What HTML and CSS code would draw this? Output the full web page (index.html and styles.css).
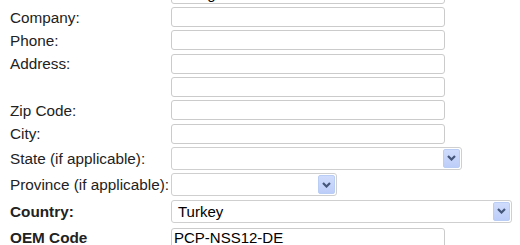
FILE: index.html
```html
<!DOCTYPE html>
<html>
<head>
<meta charset="utf-8">
<link rel="stylesheet" href="styles.css">
</head>
<body>
<div class="form">
  <div class="label"></div>
  <div class="field"><div class="input w-std">Georg</div></div>

  <div class="label">Company:</div>
  <div class="field"><div class="input w-std"></div></div>

  <div class="label">Phone:</div>
  <div class="field"><div class="input w-std"></div></div>

  <div class="label">Address:</div>
  <div class="field"><div class="input w-std"></div></div>

  <div class="label"></div>
  <div class="field"><div class="input w-std"></div></div>

  <div class="label">Zip Code:</div>
  <div class="field"><div class="input w-std"></div></div>

  <div class="label">City:</div>
  <div class="field"><div class="input w-std"></div></div>

  <div class="label">State (if applicable):</div>
  <div class="field">
    <div class="select w-state"><span class="sel-text"></span>
      <span class="sel-btn"><svg width="9" height="6" viewBox="0 0 9 6"><path d="M1 1 L4.5 4.5 L8 1" fill="none" stroke="#45567a" stroke-width="2.2"/></svg></span>
    </div>
  </div>

  <div class="label">Province (if applicable):</div>
  <div class="field">
    <div class="select w-prov"><span class="sel-text"></span>
      <span class="sel-btn"><svg width="9" height="6" viewBox="0 0 9 6"><path d="M1 1 L4.5 4.5 L8 1" fill="none" stroke="#45567a" stroke-width="2.2"/></svg></span>
    </div>
  </div>

  <div class="label bold">Country:</div>
  <div class="field">
    <div class="select w-country"><span class="sel-text">Turkey</span>
      <span class="sel-btn"><svg width="9" height="6" viewBox="0 0 9 6"><path d="M1 1 L4.5 4.5 L8 1" fill="none" stroke="#45567a" stroke-width="2.2"/></svg></span>
    </div>
  </div>

  <div class="label bold oem">OEM Code</div>
  <div class="field oem"><div class="input w-std">PCP-NSS12-DE</div></div>
</div>
</body>
</html>
```

FILE: styles.css
```css
html, body {
  margin: 0;
  padding: 0;
  background: #ffffff;
  overflow: hidden;
}

body {
  width: 520px;
  height: 245px;
  font-family: "Liberation Sans", Arial, sans-serif;
  font-size: 15px;
  color: #1e1e1e;
}

.form {
  display: grid;
  grid-template-columns: 161px 1fr;
  row-gap: 3.33px;
  align-items: center;
  margin: -16.33px 0 0 10px;
}

.label {
  white-space: nowrap;
  line-height: 17px;
  font-size: 15.3px;
  color: #222;
}

.bold {
  font-weight: bold;
}

.oem {
  margin-top: 2px;
}

.field {
  display: flex;
}

.input {
  box-sizing: border-box;
  height: 20px;
  border: 1px solid #cbcbcb;
  border-radius: 3px;
  background: #fff;
  padding: 0 2px;
  line-height: 18px;
  color: #000;
  white-space: nowrap;
  overflow: hidden;
}

.w-std { width: 274px; }
.w-state { width: 291px; }
.w-prov { width: 166px; }
.w-country { width: 341px; }

.select {
  box-sizing: border-box;
  height: 23px;
  border: 1px solid #cfcfcf;
  border-radius: 3px;
  background: #fff;
  display: flex;
  align-items: center;
  justify-content: space-between;
  padding: 1px 1px 1px 6px;
  color: #000;
}

.sel-text {
  line-height: 17px;
}

.sel-btn {
  box-sizing: border-box;
  width: 17px;
  height: 19px;
  border: 1px solid #bacdf5;
  border-radius: 2px;
  background: linear-gradient(#d0dcfc, #bccdf8);
  display: flex;
  align-items: center;
  justify-content: center;
}

.sel-btn svg {
  display: block;
}
```
